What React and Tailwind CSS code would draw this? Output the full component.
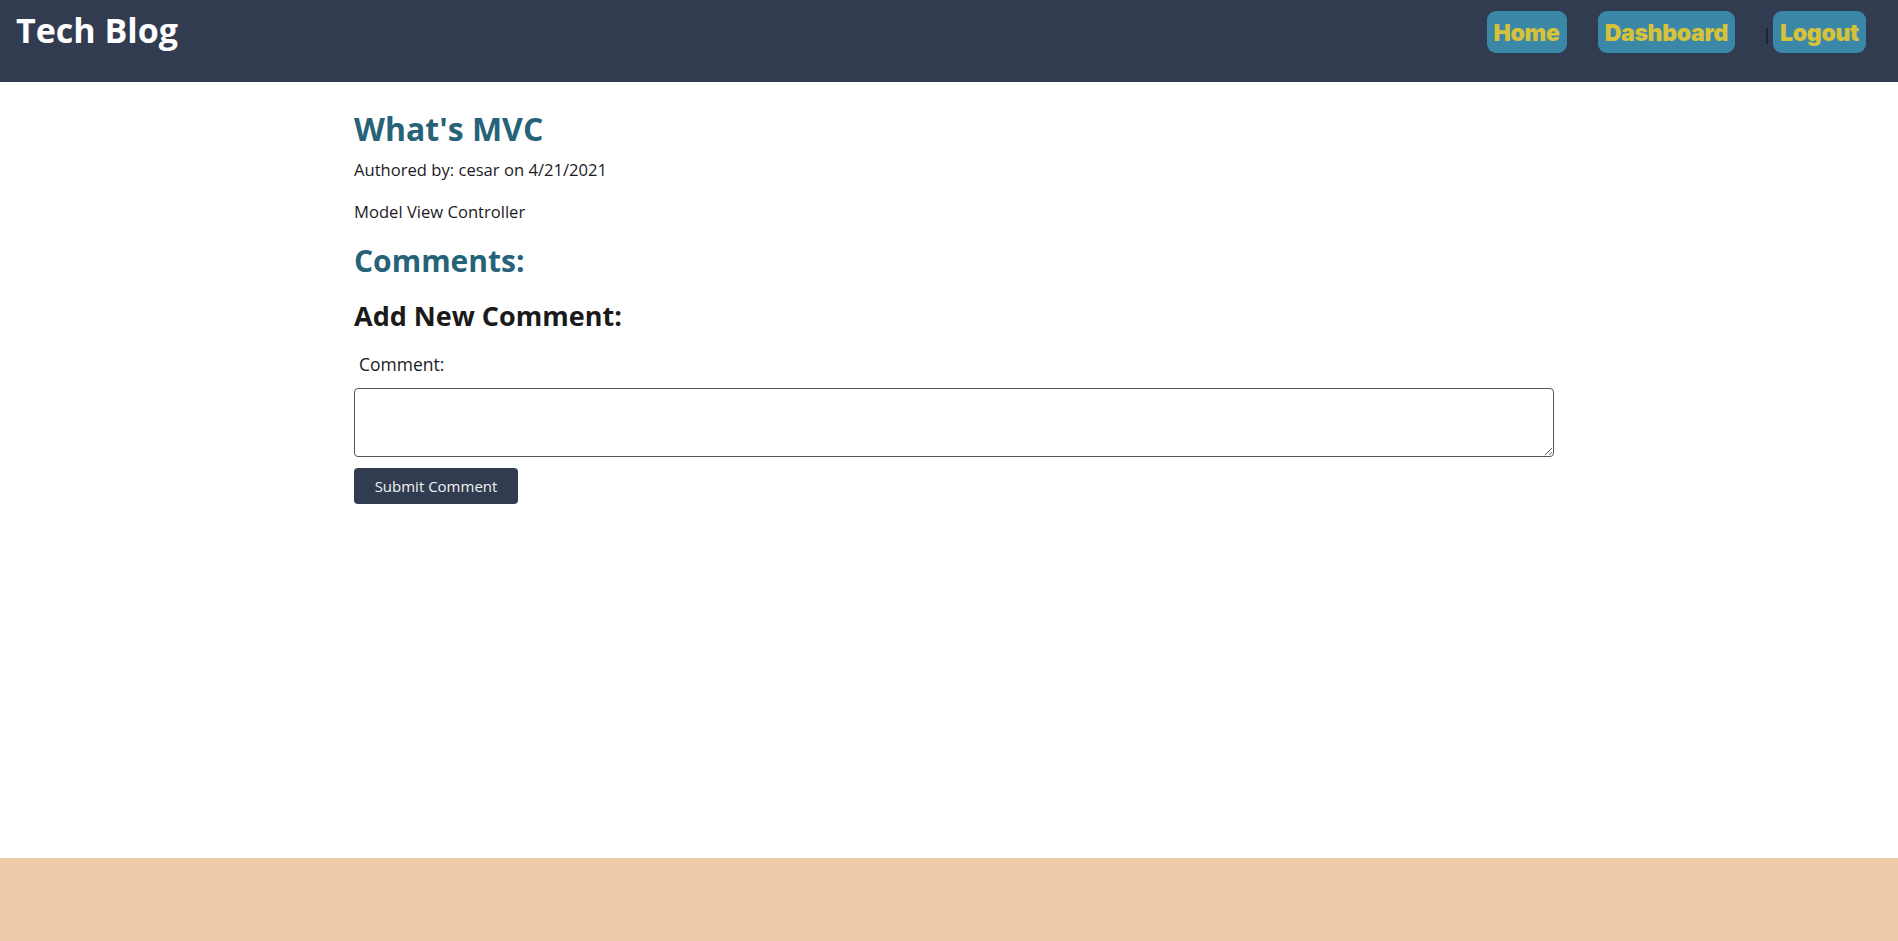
import React from "react";

const NavButton = ({ children }) => (
    <a href="#" className="h-[42px] px-[7px] pt-[3px] flex items-center rounded-[9px] bg-[#3a87a7] text-[#d6c23a] text-[23px] font-black leading-none tracking-[-0.3px]">
        {children}
    </a>
);

const App = () => {
    return (
        <div className="min-h-screen flex flex-col bg-white font-['Open_Sans',sans-serif]">
            <header className="h-[82px] bg-[#313c50] flex justify-between items-start">
                <h1 className="ml-4 mt-[9px] text-[34px] leading-[42px] font-bold text-white">Tech Blog</h1>
                <nav className="mt-[11px] mr-8 flex items-center font-['Inter',sans-serif]">
                    <NavButton>Home</NavButton>
                    <div className="ml-[31px]">
                        <NavButton>Dashboard</NavButton>
                    </div>
                    <span className="ml-[31px] mr-[5px] mt-[8px] w-[2px] h-[16px] bg-[#1f2633]"></span>
                    <NavButton>Logout</NavButton>
                </nav>
            </header>

            <main className="flex-1">
                <div className="max-w-[1210px] mx-auto pl-[10px] pt-[27px]">
                    <h2 className="text-[32px] leading-[40px] font-bold text-[#276378]">What's MVC</h2>
                    <p className="mt-[9px] text-[16.6px] leading-6 text-[#1c1a26]">Authored by: cesar on 4/21/2021</p>
                    <p className="mt-[18px] text-[16.6px] leading-6 text-[#1c1a26]">Model View Controller</p>
                    <h3 className="mt-[19px] text-[30px] leading-[36px] font-bold text-[#276378]">Comments:</h3>

                    <form className="flex flex-col items-start">
                        <h3 className="mt-[21px] text-[27px] leading-8 font-bold text-[#1a1a1a]">Add New Comment:</h3>
                        <label className="mt-[20px] pl-[5px] text-[17.5px] leading-6 text-[#1c1a26]">Comment:</label>
                        <textarea className="mt-[12px] w-[1200px] h-[69px] border border-[#555] rounded-[4px] p-1 text-[15px]"></textarea>
                        <button type="button" className="mt-[11px] w-[164px] h-[36px] rounded-[4px] bg-[#313c50] text-[#f2f2f2] text-[15px]">
                            Submit Comment
                        </button>
                    </form>
                </div>
            </main>

            <footer className="h-[83px] bg-[#eecaa9]"></footer>
        </div>
    );
};

export default App;
